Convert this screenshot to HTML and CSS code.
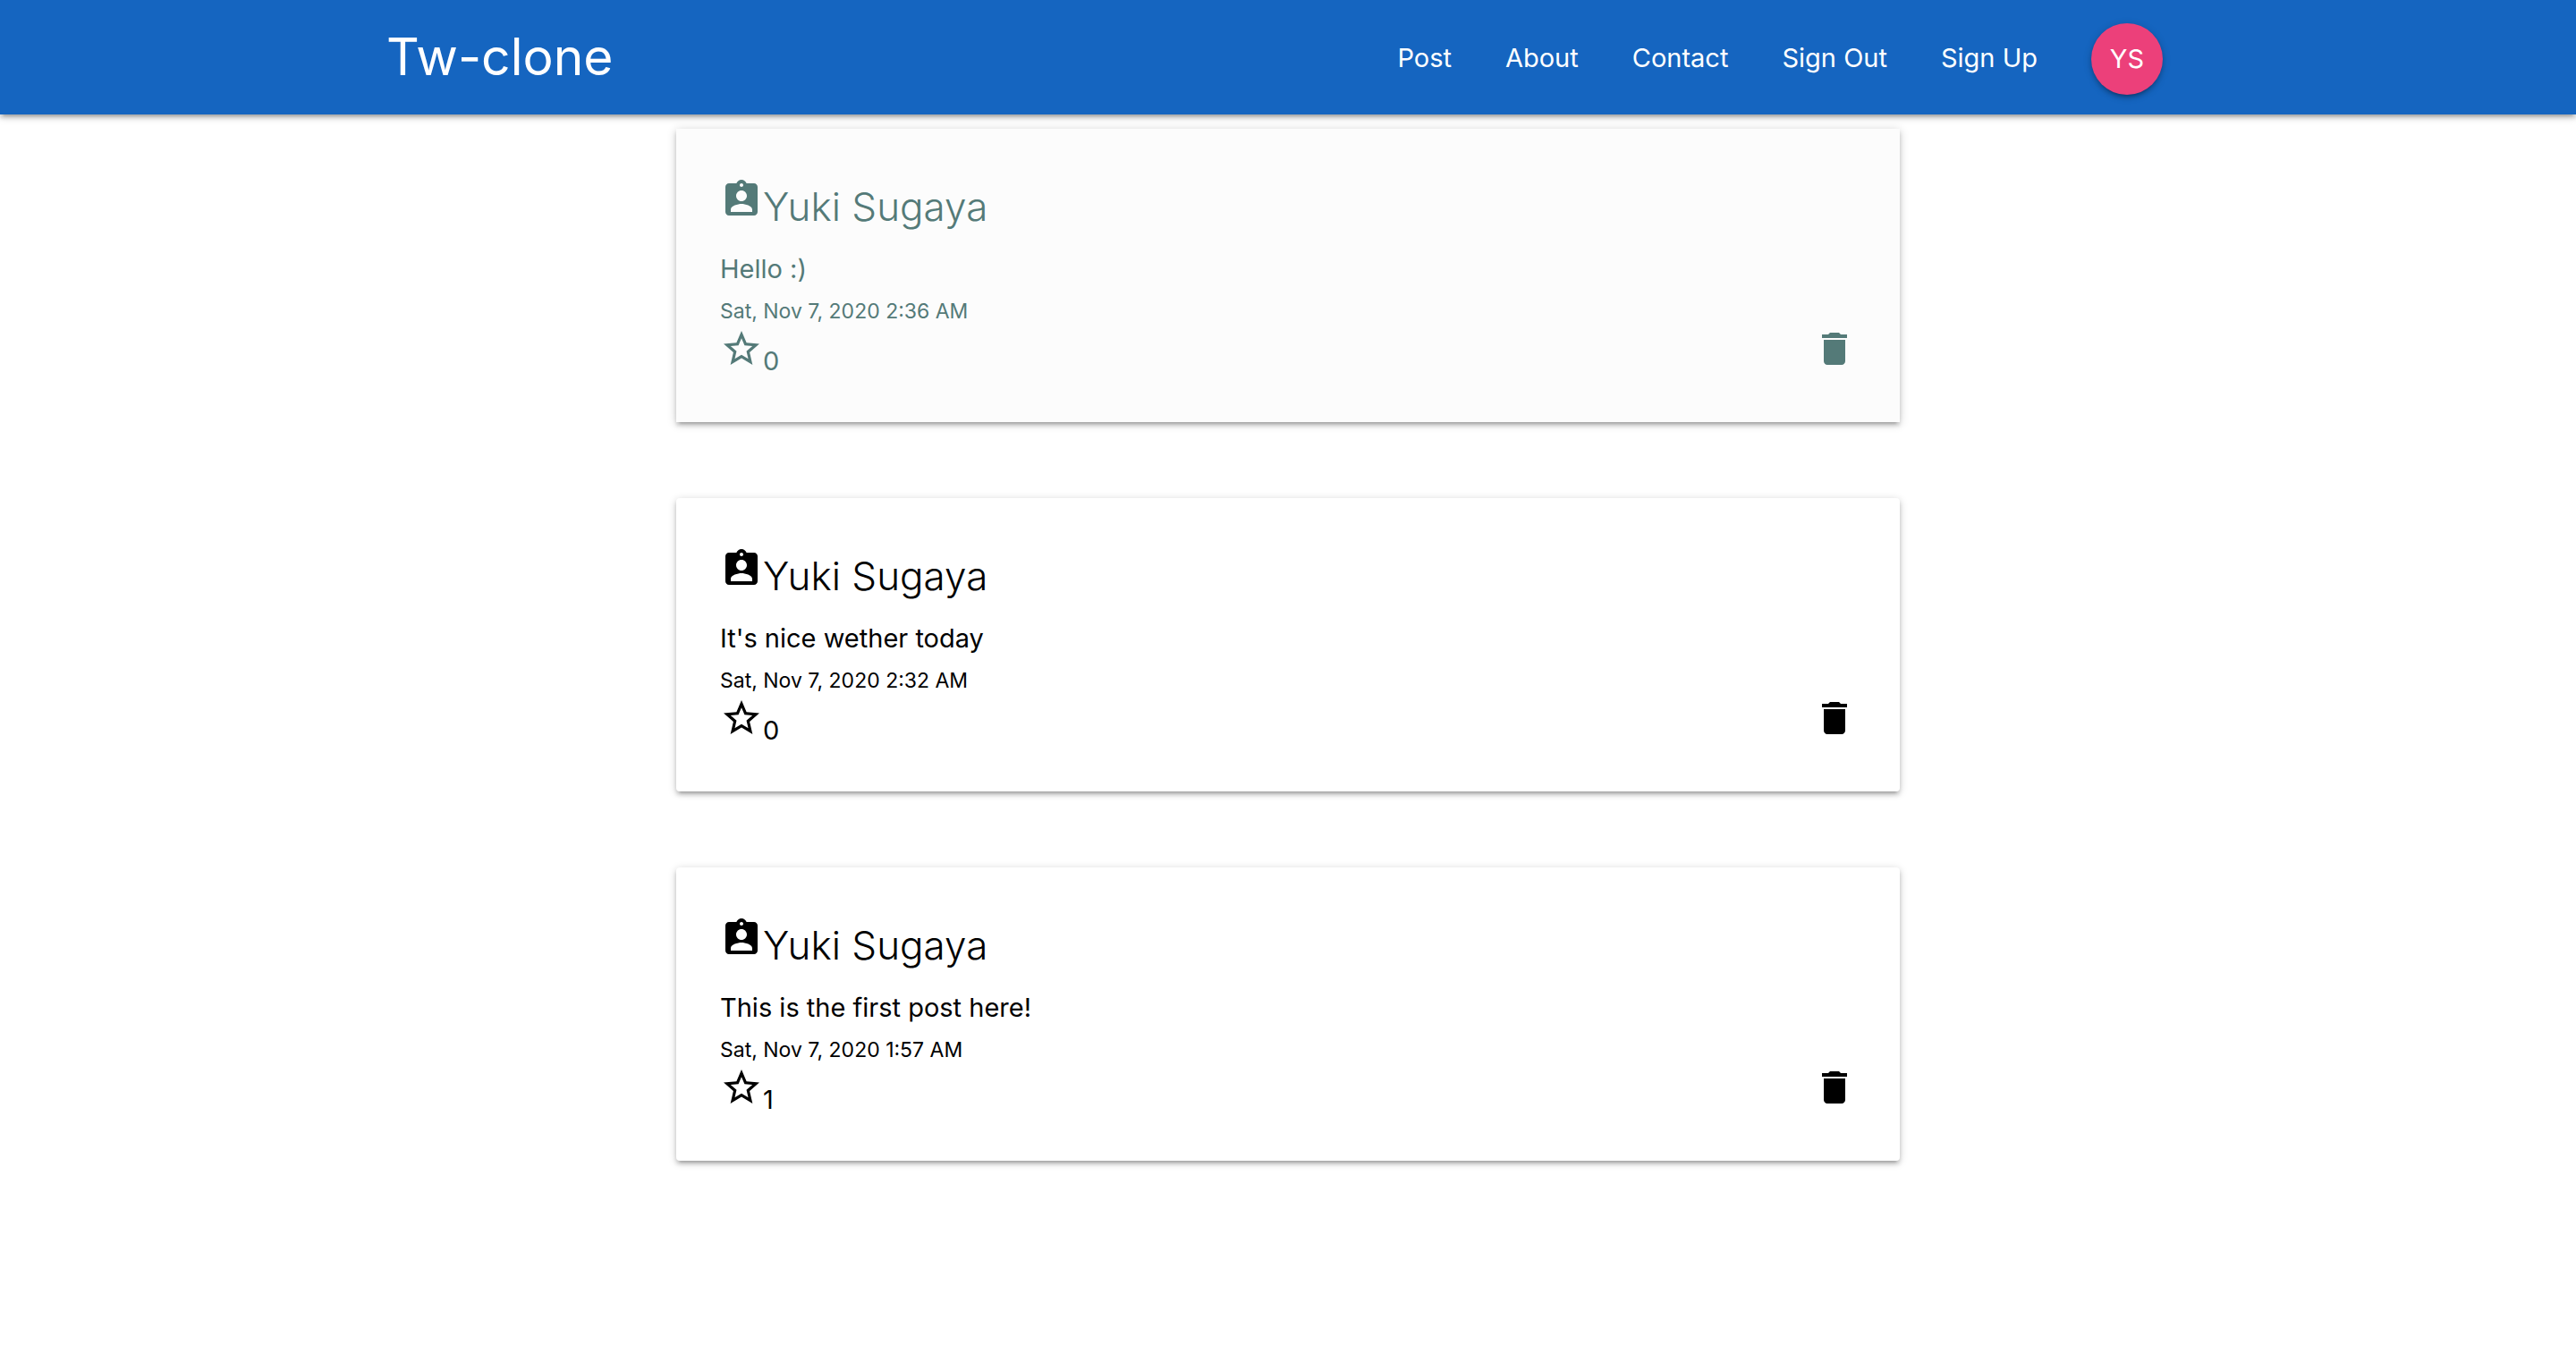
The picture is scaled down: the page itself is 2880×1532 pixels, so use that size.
FILE: index.html
```html
<!DOCTYPE html>
<html lang="en">
<head>
<meta charset="utf-8">
<title>Tw-clone</title>
<meta name="viewport" content="width=device-width, initial-scale=1">
<link rel="stylesheet" href="styles.css">
</head>
<body>
<svg class="sprite" aria-hidden="true">
  <symbol id="person" viewBox="0 0 24 24"><path d="M19 3h-4.180C14.400 1.840 13.300 1 12 1c-1.300 0-2.400.84-2.820 2H5c-1.100 0-2 .9-2 2v14c0 1.100.9 2 2 2h14c1.100 0 2-.9 2-2V5c0-1.100-.9-2-2-2zm-7 0c.55 0 1 .45 1 1s-.45 1-1 1-1-.45-1-1 .45-1 1-1zm0 4c1.660 0 3 1.340 3 3s-1.340 3-3 3-3-1.340-3-3 1.340-3 3-3zm6 12H6v-1.400c0-2 4-3.100 6-3.100s6 1.100 6 3.100V19z"/></symbol>
  <symbol id="star" viewBox="0 0 24 24"><path d="M22 9.240l-7.190-.62L12 2 9.190 8.630 2 9.240l5.460 4.730L5.820 21 12 17.270 18.180 21l-1.630-7.030L22 9.240zM12 15.400l-3.760 2.270 1-4.280-3.320-2.880 4.380-.38L12 6.100l1.710 4.040 4.380.38-3.320 2.880 1 4.280L12 15.400z"/></symbol>
  <symbol id="trash" viewBox="0 0 24 24"><path d="M6 19c0 1.100.9 2 2 2h8c1.100 0 2-.9 2-2V7H6v12zM19 4h-3.500l-1-1h-5l-1 1H5v2h14V4z"/></symbol>
</svg>
<header class="navbar">
  <nav class="navbar-inner">
    <a class="brand" href="#">Tw-clone</a>
    <ul class="menu">
      <li><a class="menu-link" href="#">Post</a></li>
      <li><a class="menu-link" href="#">About</a></li>
      <li><a class="menu-link" href="#">Contact</a></li>
      <li><a class="menu-link" href="#">Sign Out</a></li>
      <li><a class="menu-link" href="#">Sign Up</a></li>
      <li><a class="avatar" href="#">YS</a></li>
    </ul>
  </nav>
</header>
<main class="feed">
  <article class="card card-active">
    <h2 class="name"><svg class="icon" aria-hidden="true"><use href="#person"/></svg>Yuki Sugaya</h2>
    <p class="text">Hello :)</p>
    <p class="date">Sat, Nov 7, 2020 2:36 AM</p>
    <div class="actions">
      <button class="action" type="button" aria-label="Like"><svg class="icon" aria-hidden="true"><use href="#star"/></svg>0</button>
      <button class="action" type="button" aria-label="Delete"><svg class="icon" aria-hidden="true"><use href="#trash"/></svg></button>
    </div>
  </article>
  <article class="card">
    <h2 class="name"><svg class="icon" aria-hidden="true"><use href="#person"/></svg>Yuki Sugaya</h2>
    <p class="text">It's nice wether today</p>
    <p class="date">Sat, Nov 7, 2020 2:32 AM</p>
    <div class="actions">
      <button class="action" type="button" aria-label="Like"><svg class="icon" aria-hidden="true"><use href="#star"/></svg>0</button>
      <button class="action" type="button" aria-label="Delete"><svg class="icon" aria-hidden="true"><use href="#trash"/></svg></button>
    </div>
  </article>
  <article class="card">
    <h2 class="name"><svg class="icon" aria-hidden="true"><use href="#person"/></svg>Yuki Sugaya</h2>
    <p class="text">This is the first post here!</p>
    <p class="date">Sat, Nov 7, 2020 1:57 AM</p>
    <div class="actions">
      <button class="action" type="button" aria-label="Like"><svg class="icon" aria-hidden="true"><use href="#star"/></svg>1</button>
      <button class="action" type="button" aria-label="Delete"><svg class="icon" aria-hidden="true"><use href="#trash"/></svg></button>
    </div>
  </article>
</main>
</body>
</html>
```
FILE: styles.css
```css
* { box-sizing: border-box; }

body {
  margin: 0;
  background: #fff;
  color: #000;
  font-family: Inter, "Liberation Sans", sans-serif;
  font-size: 29px;
}

.sprite { display: none; }

.navbar {
  background: #1565c0;
  box-shadow: 0 4px 4px rgba(0, 0, 0, .14), 0 6px 2px -4px rgba(0, 0, 0, .12), 0 2px 10px rgba(0, 0, 0, .2);
}

.navbar-inner {
  display: flex;
  align-items: center;
  justify-content: space-between;
  width: 70%;
  height: 128px;
  margin: 0 auto;
  line-height: 128px;
}

.navbar a { color: #fff; text-decoration: none; }
.brand { font-size: 57px; }

.menu {
  display: flex;
  align-items: center;
  margin: 0;
  padding: 0;
  list-style: none;
}

.menu-link { display: block; padding: 2px 30px 0; }

.avatar {
  display: block;
  width: 80px;
  height: 80px;
  margin: 4px 30px 0;
  border-radius: 50%;
  background: #ec407a;
  box-shadow: 0 4px 4px rgba(0, 0, 0, .14), 0 6px 2px -4px rgba(0, 0, 0, .12), 0 2px 10px rgba(0, 0, 0, .2);
  line-height: 80px;
  text-align: center;
}

.feed {
  display: flex;
  flex-direction: column;
  gap: 85px;
  width: 1368px;
  max-width: 100%;
  margin: 16px auto;
}

.card {
  padding: 55px 49px 46px;
  border-radius: 4px;
  background: #fff;
  box-shadow: 0 4px 4px rgba(0, 0, 0, .14), 0 6px 2px -4px rgba(0, 0, 0, .12), 0 2px 10px rgba(0, 0, 0, .2);
}

.card-active {
  border-radius: 0;
  background: #fcfcfc;
  color: #547a78;
}

.name {
  margin: 0;
  font-size: 44px;
  font-weight: 300;
  line-height: 64px;
}

.text { margin: 15px 0 0; line-height: 46px; }
.date { margin: 6px 0 0; font-size: 23px; line-height: 36px; }

.icon { width: 48px; height: 48px; fill: currentColor; }

.actions {
  display: flex;
  justify-content: space-between;
  align-items: flex-start;
  height: 60px;
}

.action {
  padding: 0;
  border: 0;
  background: none;
  color: inherit;
  font: inherit;
  line-height: 46px;
  cursor: pointer;
}
```
